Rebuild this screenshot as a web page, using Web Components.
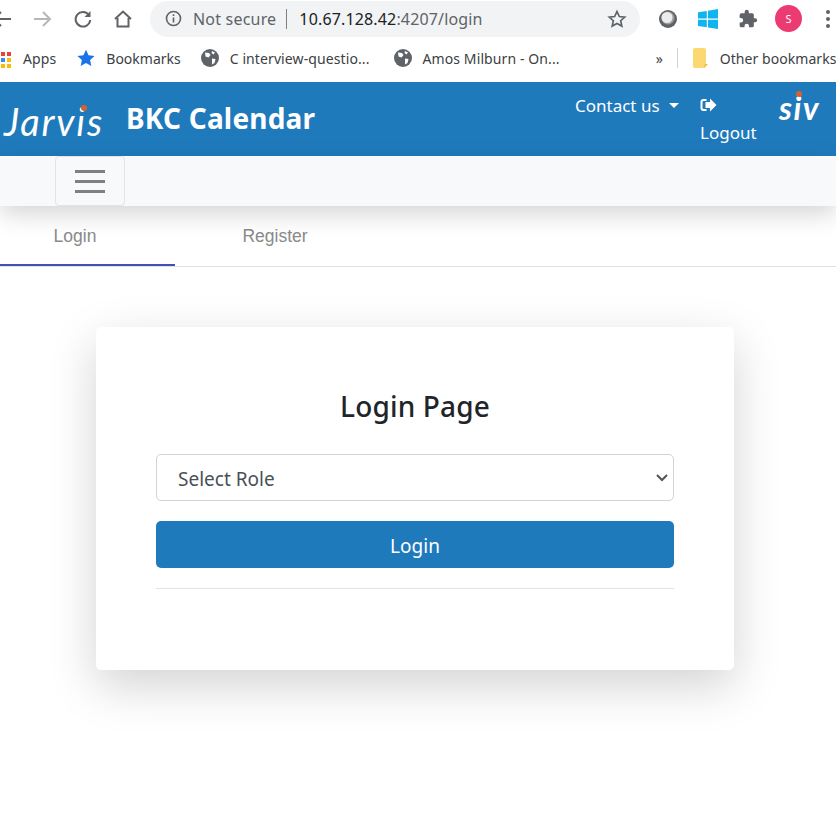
<!DOCTYPE html>
<html>
<head>
<meta charset="utf-8">
<title>BKC Calendar</title>
<style>
  html, body { margin: 0; padding: 0; background: #fff; }
  body { width: 836px; height: 829px; overflow: hidden; font-family: "Noto Sans", "Open Sans", sans-serif; }
</style>
</head>
<body>
<browser-toolbar></browser-toolbar>
<bookmark-bar></bookmark-bar>
<app-header></app-header>
<app-navbar></app-navbar>
<app-tabs></app-tabs>
<login-card></login-card>

<script>
class BrowserToolbar extends HTMLElement {
  connectedCallback() {
    this.attachShadow({ mode: "open" });
    this.shadowRoot.innerHTML = `
    <style>
      :host { display: flex; align-items: center; height: 37px; background: #fff; font-family: "Noto Sans", sans-serif; }
      svg { display: block; flex: none; }
      .nav { display: flex; align-items: center; margin-left: -9px; gap: 20px; width: 150px; flex: none; }
      .omnibox { flex: none; display: flex; align-items: center; width: 490px; height: 36px; border-radius: 18px; background: #f1f3f4; margin-left: 9px; box-sizing: border-box; padding: 0 13px 0 15px; font-size: 16px; color: #5f6368; }
      .secure { margin-left: 11px; letter-spacing: .2px; }
      .sep { width: 1px; height: 20px; background: #7d8185; margin: 0 12px 0 10px; }
      .host { color: #202124; }
      .url { flex: 1; letter-spacing: .15px; white-space: nowrap; }
      .tools { display: flex; align-items: center; margin-left: 18px; }
      .avatar { width: 27px; height: 27px; border-radius: 50%; background: #ec3a73; color: #fff; font-size: 11px; display: flex; align-items: center; justify-content: center; margin-left: 17px; }
      .more { display: flex; flex-direction: column; gap: 3px; margin-left: 24px; }
      .more i { display: block; width: 4px; height: 4px; border-radius: 50%; background: #5f6368; }
    </style>
    <div class="nav">
      <svg width="22" height="22" viewBox="0 0 22 22" fill="none" stroke="#5f6368" stroke-width="2"><path d="M20 11H3M10 4l-7 7 7 7"/></svg>
      <svg width="20" height="20" viewBox="0 0 20 20" fill="none" stroke="#b5b7ba" stroke-width="2"><path d="M1 10h16M10 3l7 7-7 7"/></svg>
      <svg width="20" height="20" viewBox="0 0 20 20" fill="none" stroke="#5f6368" stroke-width="2"><path d="M16 6.2A7.3 7.3 0 1 0 17.2 11"/><path d="M17.5 2v6h-6" fill="#5f6368" stroke="none"/></svg>
      <svg width="20" height="20" viewBox="0 0 20 20" fill="none" stroke="#5f6368" stroke-width="2"><path d="M2 10l8-7.5L18 10M4.5 9v8.5h11V9"/></svg>
    </div>
    <div class="omnibox">
      <svg width="17" height="17" viewBox="0 0 17 17" fill="none" stroke="#5f6368" stroke-width="1.6"><circle cx="8.5" cy="8.5" r="7"/><path d="M8.5 7.5v5M8.5 4.3v1.8"/></svg>
      <span class="secure">Not secure</span><span class="sep"></span>
      <span class="url"><span class="host">10.67.128.42</span>:4207/login</span>
      <svg width="20" height="20" viewBox="0 0 24 24" fill="none" stroke="#5f6368" stroke-width="2"><path d="M12 3l2.8 6 6.5.7-4.9 4.4 1.4 6.4L12 17.3 6.200 20.500l1.400-6.400L2.700 9.700 9.200 9z"/></svg>
    </div>
    <div class="tools">
      <svg width="20" height="20" viewBox="0 0 20 20"><circle cx="10" cy="10" r="9" fill="#5f6368"/><circle cx="10" cy="9" r="6.500" fill="#9a9c9e"/><circle cx="9" cy="8.500" r="5.500" fill="#ececec"/></svg>
      <svg width="20" height="20" viewBox="0 0 20 20" fill="#10b4ee" style="margin-left:20px"><path d="M0 3.200l8.800-1.300v7.700H0zM10 1.700L20 0v9.600H10zM0 10.800h8.800v7.400L0 17zM10 10.800h10V20l-10-1.600z"/></svg>
      <svg width="20" height="20" viewBox="0 0 24 24" fill="#5f6368" style="margin-left:20px"><path d="M20.500 11H19V7a2 2 0 0 0-2-2h-4V3.500a2.500 2.500 0 0 0-5 0V5H4a2 2 0 0 0-2 2v3.800h1.500a2.700 2.700 0 0 1 0 5.400H2V20a2 2 0 0 0 2 2h3.800v-1.500a2.700 2.700 0 0 1 5.400 0V22H17a2 2 0 0 0 2-2v-4h1.500a2.500 2.500 0 0 0 0-5z"/></svg>
      <span class="avatar">S</span>
      <span class="more"><i></i><i></i><i></i></span>
    </div>`;
  }
}

class BookmarkBar extends HTMLElement {
  connectedCallback() {
    this.attachShadow({ mode: "open" });
    const globe = `<svg width="18" height="18" viewBox="0 0 18 18"><circle cx="9" cy="9" r="9" fill="#5f6368"/><path d="M4 3.500l4 .5 1.500 2-2 2.500-3-1zM11 9.500l3.500.5-1 4-2.500 1.500zM11 2l3 1.500-1.500 2L10.500 4z" fill="#fff"/></svg>`;
    this.shadowRoot.innerHTML = `
    <style>
      :host { display: flex; align-items: center; height: 45px; background: #fff; font-family: "Noto Sans", sans-serif; font-size: 14px; color: #3c4043; white-space: nowrap; box-sizing: border-box; padding-bottom: 3px; }
      svg { display: block; flex: none; }
      .grid { display: grid; grid-template-columns: repeat(2, 4px); grid-auto-rows: 4px; gap: 2px; margin: 3px 12px 0 1px; flex: none; }
      .grid i { display: block; }
      .sep { width: 1px; height: 20px; background: #d0d1d3; flex: none; }
    </style>
    <div class="grid">
      <i style="background:#ea4335"></i><i style="background:#ea4335"></i>
      <i style="background:#4285f4"></i><i style="background:#fbbc05"></i>
      <i style="background:#fbbc05"></i><i style="background:#fbbc05"></i>
    </div>
    <span style="letter-spacing:.1px">Apps</span>
    <svg width="18" height="18" viewBox="0 0 24 24" fill="#1a73e8" style="margin-left:21px"><path d="M12 1l3.400 7.400 8 .9-5.900 5.400 1.600 8L12 18.700 4.900 22.700l1.600-8L.6 9.300l8-.9z"/></svg>
    <span style="margin-left:11px">Bookmarks</span>
    ${globe.replace("<svg", '<svg style="margin-left:20px"')}
    <span style="margin-left:11px;letter-spacing:.1px">C interview-questio...</span>
    ${globe.replace("<svg", '<svg style="margin-left:24px"')}
    <span style="margin-left:11px;letter-spacing:.1px">Amos Milburn - On...</span>
    <span style="margin-left:96px">&raquo;</span>
    <span class="sep" style="margin-left:14px"></span>
    <svg width="16" height="20" viewBox="0 0 16 20" style="margin-left:14px"><path d="M1 2a2 2 0 0 1 2-2h9a2 2 0 0 1 2 2v16a2 2 0 0 1-2 2H3a2 2 0 0 1-2-2z" fill="#fbd872"/><path d="M12 20l4-4h-3z" fill="#f0b93a"/></svg>
    <span style="margin-left:12px;letter-spacing:.05px">Other bookmarks</span>`;
  }
}

class AppHeader extends HTMLElement {
  connectedCallback() {
    this.attachShadow({ mode: "open" });
    this.shadowRoot.innerHTML = `
    <style>
      :host { display: flex; height: 74px; background: #1f7abc; color: #fff; font-family: "Noto Sans", sans-serif; box-sizing: border-box; }
      svg { display: block; }
      .logo { font-family: "Lato", sans-serif; font-style: italic; position: relative; white-space: nowrap; }
      .jarvis { font-size: 38px; font-weight: 400; margin: 17px 0 0 4px; line-height: 44px; letter-spacing: 1.800px; width: 101px; flex: none; }
      .dot { position: absolute; width: 6px; height: 6px; border-radius: 50%; background: #d9602c; }
      .title { font-size: 28px; font-weight: 700; margin: 17px 0 0 21px; line-height: 38px; letter-spacing: .2px; width: 449px; flex: none; white-space: nowrap; }
      .links { font-size: 17px; line-height: 27px; display: flex; flex: none; }
      .contact { margin-top: 10px; display: flex; align-items: flex-start; width: 125px; white-space: nowrap; }
      .caret { width: 0; height: 0; border: 5px solid transparent; border-top-color: #fff; border-bottom: 0; margin: 11px 0 0 9px; }
      .logout { margin-top: 16px; display: flex; flex-direction: column; width: 79px; }
      .logout svg { margin-bottom: 7px; }
      .siv { font-size: 32px; font-weight: 700; margin: 6px 0 0 0; line-height: 40px; letter-spacing: 1.500px; }
    </style>
    <div class="logo jarvis">Jarvis<i class="dot"></i></div>
    <div class="title">BKC Calendar</div>
    <div class="links">
      <div class="contact">Contact us<i class="caret"></i></div>
      <div class="logout">
        <svg width="17" height="14" viewBox="0 0 17 14" fill="#fff"><path d="M6.500 1H3.500A3 3 0 0 0 .5 4v6a3 3 0 0 0 3 3h3v-2H3.700a1.200 1.200 0 0 1-1.200-1.200V4.200A1.200 1.200 0 0 1 3.700 3h2.800z"/><path d="M10 .5v3.500H5.500v6H10v3.500L16.500 7z"/></svg>
        <span>Logout</span>
      </div>
    </div>
    <div class="logo siv">siv<i class="dot"></i></div>`;
    const dots = this.shadowRoot.querySelectorAll(".dot");
    dots[0].style.cssText = "left:77px;top:6px";
    dots[1].style.cssText = "left:17px;top:3px";
  }
}

class AppNavbar extends HTMLElement {
  connectedCallback() {
    this.attachShadow({ mode: "open" });
    this.shadowRoot.innerHTML = `
    <style>
      :host { display: flex; position: relative; z-index: 1; height: 50px; background: #f8f9fa; padding-left: 55px; box-shadow: 0 8px 24px rgba(0,0,0,.17); }
      button { width: 70px; height: 50px; box-sizing: border-box; background: transparent; border: 1px solid #e2e3e5; border-radius: 4px; padding: 0; display: flex; flex-direction: column; align-items: center; justify-content: center; gap: 7px; }
      i { display: block; width: 30px; height: 3px; background: #808080; }
    </style>
    <button aria-label="Toggle navigation"><i></i><i></i><i></i></button>`;
  }
}

class AppTabs extends HTMLElement {
  connectedCallback() {
    this.attachShadow({ mode: "open" });
    this.shadowRoot.innerHTML = `
    <style>
      :host { display: flex; height: 61px; box-sizing: border-box; border-bottom: 1px solid #e0e0e0; font-family: "Liberation Sans", Arial, sans-serif; font-size: 17.500px; color: #8a8a8a; }
      div { display: flex; justify-content: center; padding-top: 20px; box-sizing: border-box; height: 60px; }
      .active { width: 175px; padding-right: 25px; border-bottom: 2px solid #3f51b5; }
      .next { width: 200px; }
    </style>
    <div class="active">Login</div>
    <div class="next">Register</div>`;
  }
}

class LoginCard extends HTMLElement {
  connectedCallback() {
    this.attachShadow({ mode: "open" });
    this.shadowRoot.innerHTML = `
    <style>
      :host { display: block; width: 638px; height: 343px; margin: 60px 0 0 96px; box-sizing: border-box; padding: 56px 60px 0; background: #fff; border-radius: 5px; box-shadow: 0 16px 48px rgba(0,0,0,.175); font-family: "Noto Sans", sans-serif; }
      h2 { margin: 0 0 25px; font-size: 28px; font-weight: 500; line-height: 46px; text-align: center; color: #212529; letter-spacing: .15px; }
      .field { position: relative; margin-bottom: 20px; }
      select { display: block; width: 100%; height: 47px; box-sizing: border-box; appearance: none; border: 1px solid #ced4da; border-radius: 5px; background: #fff; color: #495057; font: inherit; font-size: 19px; padding: 2px 21px 0; }
      .field svg { position: absolute; right: 6px; top: 20px; pointer-events: none; }
      button { display: block; width: 100%; height: 47px; border: 0; border-radius: 5px; background: #1f7abc; color: #fff; font: inherit; font-size: 19px; padding: 2px 0 0; }
      hr { border: 0; border-top: 1px solid #e2e2e2; margin: 20px 0 0; }
    </style>
    <h2>Login Page</h2>
    <div class="field">
      <select><option>Select Role</option></select>
      <svg width="12" height="8" viewBox="0 0 12 8" fill="none" stroke="#555" stroke-width="2"><path d="M1 1l5 5 5-5"/></svg>
    </div>
    <button>Login</button>
    <hr>`;
  }
}

customElements.define("browser-toolbar", BrowserToolbar);
customElements.define("bookmark-bar", BookmarkBar);
customElements.define("app-header", AppHeader);
customElements.define("app-navbar", AppNavbar);
customElements.define("app-tabs", AppTabs);
customElements.define("login-card", LoginCard);
</script>
</body>
</html>
